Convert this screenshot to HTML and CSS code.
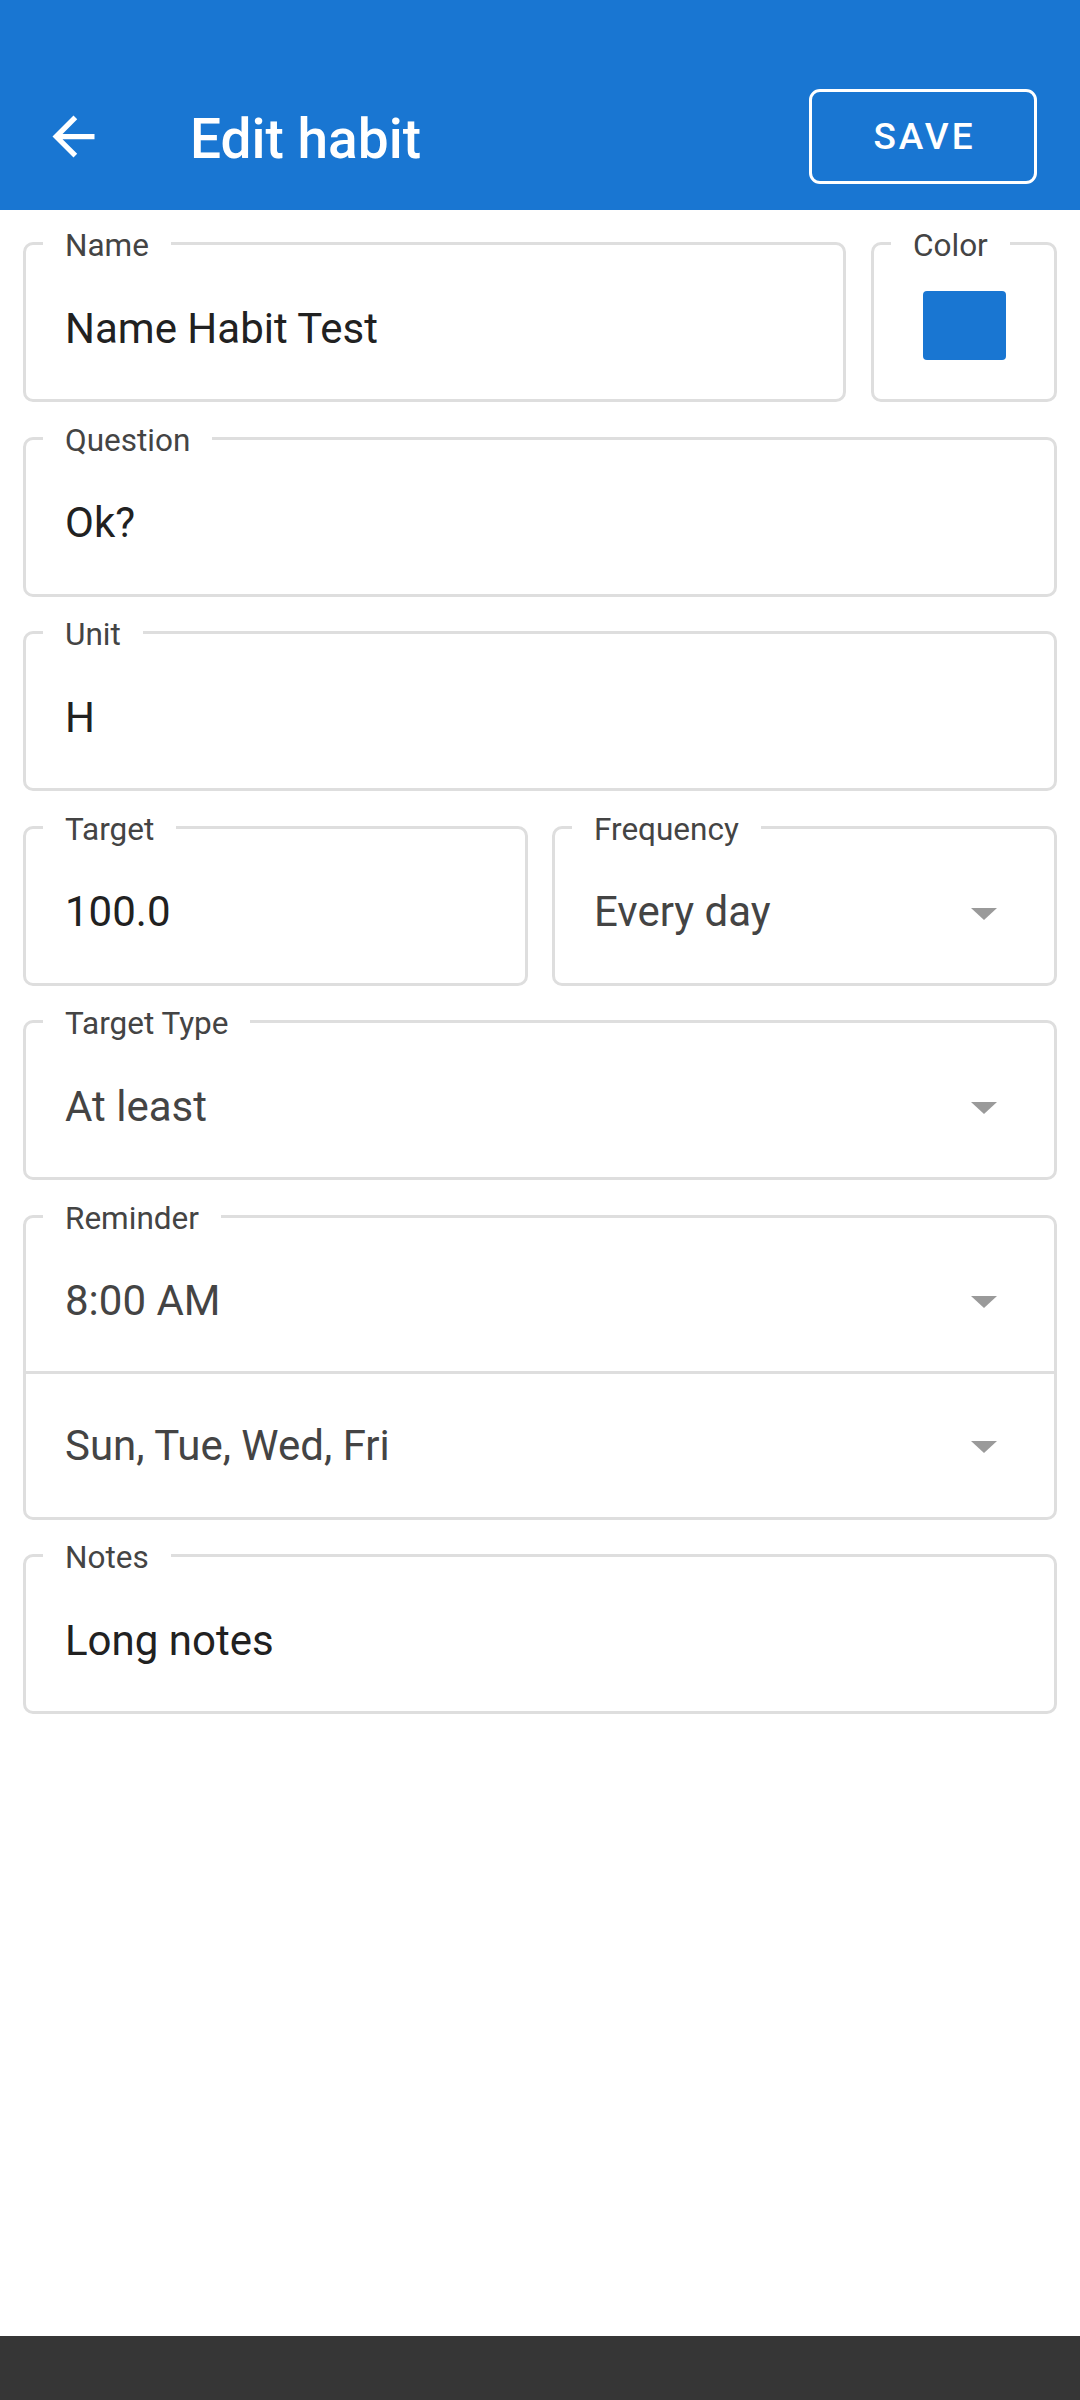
FILE: index.html
```html
<!DOCTYPE html>
<html lang="en">
<head>
<meta charset="utf-8">
<title>Edit habit</title>
<link rel="stylesheet" href="styles.css">
</head>
<body>
<div class="screen">
  <header class="appbar">
    <div class="toolbar">
      <button class="back" aria-label="Back">
        <svg viewBox="0 0 24 24" width="63" height="63"><path fill="#fff" d="M20 11H7.83l5.59-5.59L12 4l-8 8 8 8 1.41-1.41L7.83 13H20v-2z"/></svg>
      </button>
      <h1 class="title">Edit habit</h1>
      <button class="save">SAVE</button>
    </div>
  </header>

  <main class="form">
    <div class="row">
      <div class="field grow">
        <span class="label">Name</span>
        <span class="value">Name Habit Test</span>
      </div>
      <div class="field color-field">
        <span class="label">Color</span>
        <span class="swatch"></span>
      </div>
    </div>

    <div class="field">
      <span class="label">Question</span>
      <span class="value">Ok?</span>
    </div>

    <div class="field">
      <span class="label">Unit</span>
      <span class="value">H</span>
    </div>

    <div class="row two">
      <div class="field">
        <span class="label">Target</span>
        <span class="value">100.0</span>
      </div>
      <div class="field">
        <span class="label">Frequency</span>
        <span class="value select">Every day</span>
        <span class="caret"></span>
      </div>
    </div>

    <div class="field">
      <span class="label">Target Type</span>
      <span class="value select">At least</span>
      <span class="caret"></span>
    </div>

    <div class="field multi">
      <span class="label">Reminder</span>
      <div class="subrow first">
        <span class="value select">8:00 AM</span>
        <span class="caret"></span>
      </div>
      <div class="subrow second">
        <span class="value select">Sun, Tue, Wed, Fri</span>
        <span class="caret"></span>
      </div>
    </div>

    <div class="field">
      <span class="label">Notes</span>
      <span class="value">Long notes</span>
    </div>
  </main>

  <footer class="navbar"></footer>
</div>
</body>
</html>
```

FILE: styles.css
```css
* { box-sizing: border-box; }

html, body {
  margin: 0;
  padding: 0;
  background: #ffffff;
  font-family: Roboto, "Noto Sans", "Liberation Sans", sans-serif;
}

.screen {
  width: 1080px;
  min-height: 2400px;
  display: flex;
  flex-direction: column;
}

.appbar {
  background: #1976d2;
  height: 210px;
  padding-top: 63px;
}

.toolbar {
  height: 147px;
  display: flex;
  align-items: center;
  padding: 0 43px 0 42px;
}

.back {
  width: 63px;
  height: 63px;
  padding: 0;
  border: 0;
  background: none;
  display: flex;
}

.title {
  margin: 0 0 0 85px;
  flex: 1;
  color: #ffffff;
  font-size: 55px;
  font-weight: 500;
  line-height: 62px;
  padding-top: 4px;
}

.save {
  width: 228px;
  height: 95px;
  border: 3px solid #ffffff;
  border-radius: 11px;
  background: transparent;
  color: #ffffff;
  font-family: Roboto, "Noto Sans", sans-serif;
  font-size: 37px;
  font-weight: 500;
  letter-spacing: 3px;
  padding: 0 0 0 3px;
}

.form {
  flex: 1;
  display: flex;
  flex-direction: column;
  gap: 34.5px;
  padding: 32px 23px 0 23px;
}

.row {
  display: flex;
  gap: 25px;
}

.row.two {
  gap: 24px;
}

.row.two .field {
  flex: 1;
}

.grow { flex: 1; }

.field {
  position: relative;
  height: 160px;
  border: 3px solid #dedede;
  border-radius: 10px;
  display: flex;
  align-items: center;
  padding: 12px 38px 0 39px;
}

.label {
  position: absolute;
  top: -17px;
  left: 17px;
  padding: 0 22px;
  background: #ffffff;
  color: #444444;
  font-size: 31.5px;
  line-height: 36px;
  white-space: nowrap;
}

.value {
  color: #212121;
  font-size: 42px;
  line-height: 49px;
  white-space: nowrap;
}

.value.select {
  color: #444444;
}

.caret {
  margin-left: auto;
  margin-right: 19px;
  margin-top: 4px;
  width: 0;
  height: 0;
  border-left: 13px solid transparent;
  border-right: 13px solid transparent;
  border-top: 12px solid #9a9a9a;
}

.color-field {
  width: 186px;
  justify-content: center;
  padding: 10px 0 0 0;
}

.swatch {
  width: 83px;
  height: 69px;
  border-radius: 4px;
  background: #1976d2;
  margin-top: -3px;
}

.field.multi {
  height: 305px;
  flex-direction: column;
  align-items: stretch;
  padding: 0;
}

.subrow {
  display: flex;
  align-items: center;
  padding: 0 38px 0 39px;
}

.subrow.first {
  height: 156px;
  padding-top: 12px;
  border-bottom: 3px solid #dedede;
}

.subrow.second {
  flex: 1;
}

.navbar {
  height: 64px;
  background: #363636;
}
```
